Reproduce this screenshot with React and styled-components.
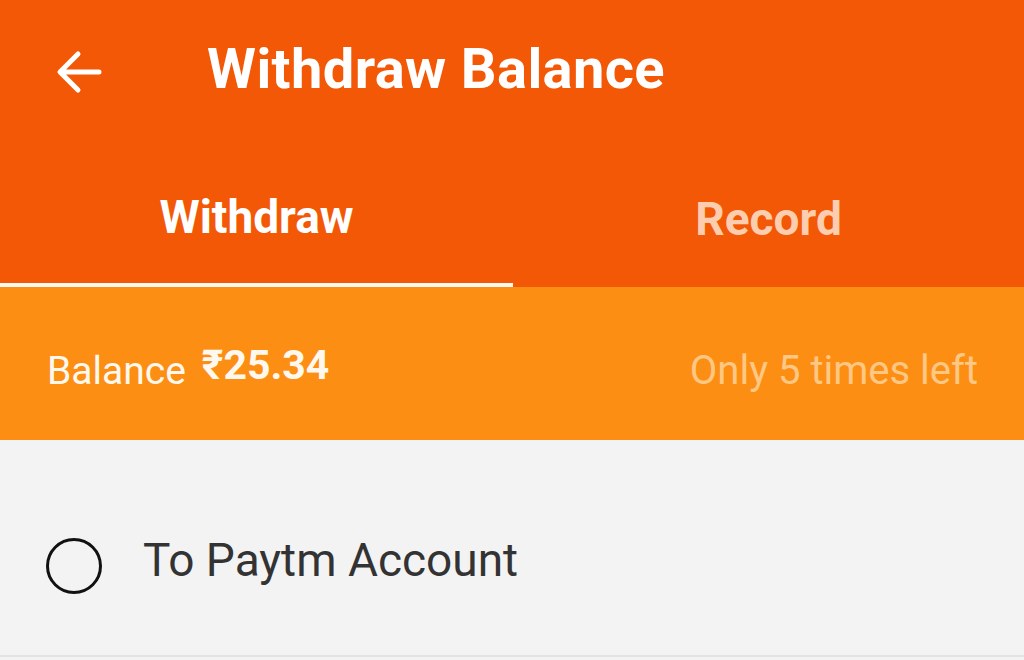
import React from "react";
import styled, { createGlobalStyle } from "styled-components";

const GlobalStyle = createGlobalStyle`
  html, body {
    margin: 0;
    padding: 0;
    background: #f3f3f3;
    font-family: Roboto, "Noto Sans", sans-serif;
  }
`;

function BackArrow() {
  return (
    <svg width="50" height="50" viewBox="0 0 50 50" fill="none">
      <path
        d="M45 25H7M24 7L6 25l18 18"
        stroke="#fff"
        strokeWidth="5"
        strokeLinecap="round"
        strokeLinejoin="round"
      />
    </svg>
  );
}

export default function App() {
  return (
    <Page>
      <GlobalStyle />
      <Header>
        <TopBar>
          <BackButton>
            <BackArrow />
          </BackButton>
          <Title>Withdraw Balance</Title>
        </TopBar>
        <Tabs>
          <Tab active>Withdraw</Tab>
          <Tab>Record</Tab>
        </Tabs>
      </Header>

      <BalanceBar>
        <BalanceText>
          Balance <Amount>₹25.34</Amount>
        </BalanceText>
        <TimesLeft>Only 5 times left</TimesLeft>
      </BalanceBar>

      <Options>
        <OptionRow>
          <Radio />
          <OptionLabel>To Paytm Account</OptionLabel>
        </OptionRow>
      </Options>
    </Page>
  );
}

const Page = styled.div`
  width: 1024px;
  height: 660px;
  overflow: hidden;
  background: #f3f3f3;
`;

const Header = styled.div`
  background: #f35806;
`;

const TopBar = styled.div`
  height: 144px;
  display: flex;
  align-items: center;
  padding-left: 54px;
  padding-bottom: 6px;
  box-sizing: border-box;
`;

const BackButton = styled.div`
  width: 50px;
  height: 50px;
  display: flex;
  align-items: center;
  justify-content: center;
  margin-right: 103px;
  margin-top: 6px;
`;

const Title = styled.h1`
  margin: 0;
  color: #fff;
  font-size: 56px;
  line-height: 1;
  font-weight: 700;
  letter-spacing: 0.4px;
`;

const Tabs = styled.div`
  display: grid;
  grid-template-columns: 513px 1fr;
  height: 143px;
`;

const Tab = styled.div`
  display: flex;
  justify-content: center;
  align-items: flex-start;
  box-sizing: border-box;
  font-size: 46px;
  line-height: 1;
  font-weight: 700;
  padding-top: ${(p) => (p.active ? "50px" : "52px")};
  color: ${(p) => (p.active ? "#ffffff" : "#fdcdaf")};
  border-bottom: 4px solid ${(p) => (p.active ? "#fff8f0" : "transparent")};
`;

const BalanceBar = styled.div`
  height: 153px;
  background: #fd8e14;
  display: flex;
  align-items: baseline;
  justify-content: space-between;
  padding: 63px 46px 0 47px;
  box-sizing: border-box;
  line-height: 1;
`;

const BalanceText = styled.div`
  color: #fff8ee;
  font-size: 39px;
  display: flex;
  align-items: baseline;
  gap: 16px;
`;

const Amount = styled.span`
  font-weight: 700;
  font-size: 41px;
  position: relative;
  top: -5px;
`;

const TimesLeft = styled.div`
  color: #fec884;
  font-size: 40px;
`;

const Options = styled.div`
  background: #f3f3f3;
`;

const OptionRow = styled.div`
  height: 217px;
  display: flex;
  align-items: center;
  padding: 37px 0 0 46px;
  box-sizing: border-box;
  border-bottom: 2px solid #e4e4e4;
`;

const Radio = styled.div`
  width: 56px;
  height: 56px;
  border: 3px solid #111;
  border-radius: 50%;
  box-sizing: border-box;
  margin-right: 41px;
`;

const OptionLabel = styled.div`
  color: #333;
  font-size: 46px;
  line-height: 1;
  margin-bottom: 13px;
`;
